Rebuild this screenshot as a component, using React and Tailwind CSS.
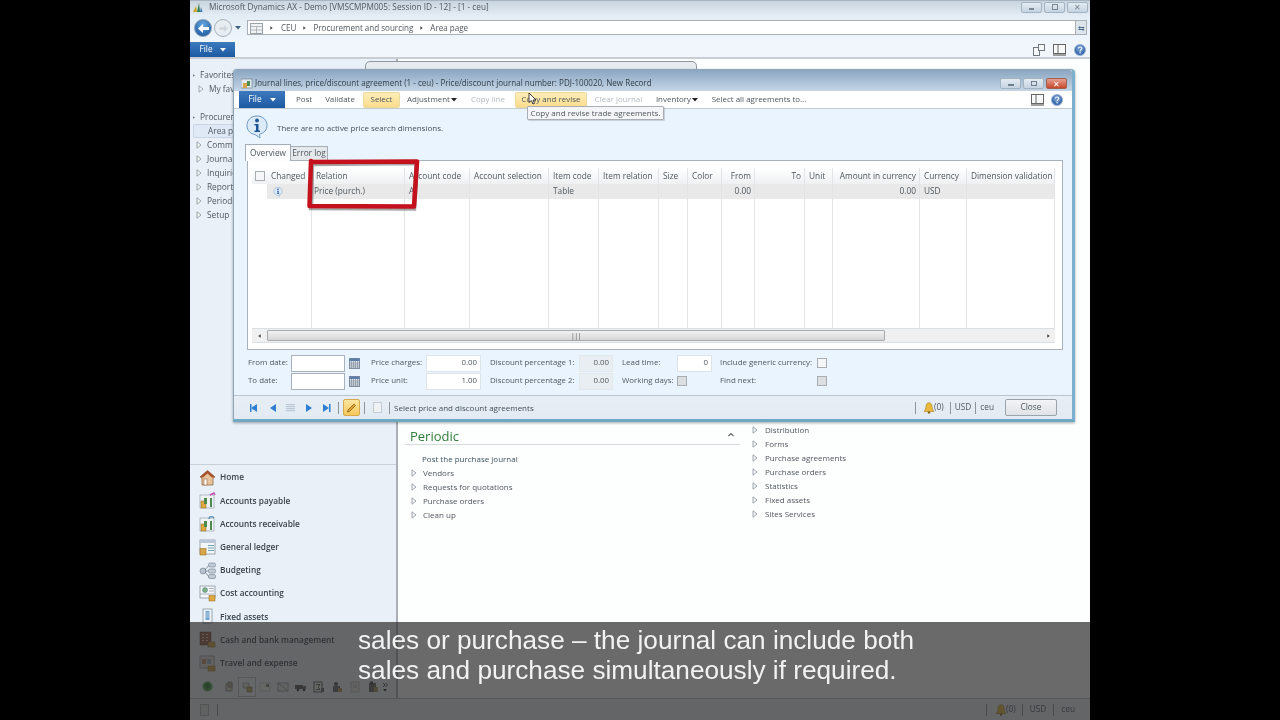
import React from "react";

const Tri = ({ c = "#8a949c" }) => (
  <svg width="6" height="8" viewBox="0 0 6 8" className="shrink-0"><path d="M1 .8 L5 4 L1 7.2 Z" fill="#f4f6f8" stroke={c} strokeWidth="0.8" /></svg>
);
const Solid = ({ dir = "r", c = "#444", s = 5 }) => (
  <svg width={s} height={s + 1} viewBox="0 0 5 6" className="shrink-0"><path d={dir === "r" ? "M.5 0 L4.5 3 L.5 6Z" : "M4.5 0 L.5 3 L4.5 6Z"} fill={c} /></svg>
);
const Drop = ({ c = "#222" }) => (
  <svg width="6" height="4" viewBox="0 0 6 4" className="shrink-0"><path d="M0 0H6L3 3.5Z" fill={c} /></svg>
);
const Help = ({ s = 13 }) => (
  <svg width={s} height={s} viewBox="0 0 13 13"><circle cx="6.5" cy="6.5" r="6" fill="#3f6fb0" stroke="#9db4d2" /><circle cx="6.5" cy="5" r="4" fill="#7fa6d8" opacity=".6" /><path d="M4.8 4.8c0-2 3.6-2 3.6 0 0 1.4-1.8 1.3-1.8 3" fill="none" stroke="#fff" strokeWidth="1.2" /><circle cx="6.6" cy="9.6" r=".8" fill="#fff" /></svg>
);
const BookIcon = () => (
  <svg width="13" height="12" viewBox="0 0 13 12"><rect x=".5" y=".5" width="12" height="9" fill="#f7f8f8" stroke="#666" /><path d="M5 .5V9.5" stroke="#666" /><path d="M0 11H13" stroke="#777" strokeWidth="1.4" /></svg>
);
const InfoBubble = ({ s = 22 }) => (
  <svg width={s} height={s} viewBox="0 0 22 24">
    <path d="M11 1C5 1 1 5 1 10.5 1 16 5 19 9 19.5L14 23 13.5 19.3C18 18 21 15 21 10.5 21 5 17 1 11 1Z" fill="#dcebf8" stroke="#6f97c0" />
    <circle cx="11" cy="5.5" r="1.9" fill="#1f5596" />
    <path d="M8.5 9H12.5V15.5H14V17H8.5V15.5H10V10.5H8.5Z" fill="#1f5596" />
  </svg>
);
const Calendar = () => (
  <svg width="11" height="11" viewBox="0 0 11 11"><rect x=".5" y=".5" width="10" height="10" fill="#dfe6ee" stroke="#7f8da0" /><rect x=".5" y=".5" width="10" height="2.5" fill="#5d7ea8" /><path d="M2.5 3V10.5M4.5 3V10.5M6.5 3V10.5M8.5 3V10.5M.5 5H10.5M.5 7H10.5M.5 9H10.5" stroke="#7a8796" strokeWidth=".6" /></svg>
);
const Check = ({ grey }) => (
  <span className={`block w-[10px] h-[10px] border border-[#a8adb2] ${grey ? "bg-[#dcdfe2]" : "bg-[#f4f6f8]"}`} />
);
const Bell = () => (
  <svg width="12" height="12" viewBox="0 0 12 12"><path d="M6 .8C3.8.8 3 2.6 3 4.5 3 7 1.5 8.5 1 9.5H11C10.5 8.5 9 7 9 4.5 9 2.6 8.2.8 6 .8Z" fill="#e8b93a" stroke="#a97f1a" strokeWidth=".6" /><circle cx="6" cy="10.5" r="1.2" fill="#8a6a1a" /></svg>
);

const WinBtn = ({ w = 21, children, red }) => (
  <span style={{ width: w }} className={`h-[11px] flex items-center justify-center border rounded-[2px] ${red ? "bg-[linear-gradient(#e8a090,#c8482c)] border-[#a0604f]" : "bg-[linear-gradient(#e3ebf2,#c6d3df)] border-[#a4b3c0]"}`}>{children}</span>
);

const leftTop = ["Comm", "Journal", "Inquirie", "Report", "Periodi", "Setup"];

const ModIcon = ({ kind }) => {
  if (kind === "home") return (
    <svg width="17" height="17" viewBox="0 0 17 17"><path d="M1 8 8.5 1.5 16 8 14 9V16H3V9Z" fill="#e6c39a" stroke="#8a5a32" strokeWidth=".7" /><path d="M1 8 8.5 1.5 16 8 13 8.5 8.5 4.5 4 8.5Z" fill="#a5502a" /><rect x="5" y="10" width="3" height="6" fill="#fff" stroke="#8a5a32" strokeWidth=".5" /></svg>
  );
  if (kind === "bud") return (
    <svg width="17" height="17" viewBox="0 0 17 17"><circle cx="4" cy="9" r="3" fill="#b8c3cf" stroke="#6f7d8c" strokeWidth=".6" /><path d="M6 8 10 3M6 9H10M6 10 10 15" stroke="#6f7d8c" strokeWidth=".8" /><rect x="9.500" y="1" width="7" height="4" rx="1.500" fill="#c2ccd6" stroke="#6f7d8c" strokeWidth=".6" /><rect x="9.500" y="7" width="7" height="4" rx="1.500" fill="#c2ccd6" stroke="#6f7d8c" strokeWidth=".6" /><rect x="9.500" y="12.500" width="7" height="4" rx="1.500" fill="#c2ccd6" stroke="#6f7d8c" strokeWidth=".6" /></svg>
  );
  if (kind === "fixed") return (
    <svg width="17" height="17" viewBox="0 0 17 17"><rect x="4" y="1" width="9" height="14" fill="#f0f3f6" stroke="#7d8894" strokeWidth=".7" /><rect x="6.500" y="3" width="4" height="9" fill="#6ea4cf" /><path d="M6.500 5H10.500M6.500 7H10.500M6.500 9H10.500" stroke="#dbe8f2" strokeWidth=".6" /></svg>
  );
  if (kind === "cash") return (
    <svg width="17" height="17" viewBox="0 0 17 17"><rect x="1" y="1" width="11" height="13" fill="#9c5f4a" stroke="#6a3a2a" strokeWidth=".5" /><path d="M3 3.500H5M7 3.500H9M3 6.500H5M7 6.500H9M3 9.500H5M7 9.500H9" stroke="#e8d0c0" /><rect x="9" y="11" width="7" height="5" fill="#d9a548" stroke="#8a6a20" strokeWidth=".5" /></svg>
  );
  if (kind === "travel") return (
    <svg width="17" height="17" viewBox="0 0 17 17"><rect x="1" y="1" width="14" height="12" fill="#e6e1dc" stroke="#7d8894" strokeWidth=".7" /><rect x="3" y="4" width="4" height="5" fill="#c88c70" /><rect x="8" y="4" width="4" height="5" fill="#9db5c8" /><rect x="9" y="11" width="7" height="5" fill="#d9a548" stroke="#8a6a20" strokeWidth=".5" /></svg>
  );
  if (kind === "doc") return (
    <svg width="17" height="17" viewBox="0 0 17 17"><rect x="1" y="1" width="15" height="12" fill="#f6f7f8" stroke="#7d8894" strokeWidth=".7" /><circle cx="6" cy="5" r="2.500" fill="#7cb07c" stroke="#4b7d9c" strokeWidth=".5" /><path d="M10 3.500H15M10 6H15M1 9H15" stroke="#8795a3" strokeWidth=".7" /><rect x="10" y="10.500" width="6" height="5.500" fill="#e0a83f" stroke="#8a6a20" strokeWidth=".5" /></svg>
  );
  if (kind === "gl") return (
    <svg width="17" height="17" viewBox="0 0 17 17"><rect x="1" y="1" width="15" height="14" fill="#f4f6f8" stroke="#7d8894" strokeWidth=".7" /><rect x="1" y="1" width="15" height="3" fill="#b9c8d8" /><path d="M9 6.500H15M9 9H15M9 11.500H15" stroke="#5e9bb0" strokeWidth=".9" /><rect x="1" y="9.500" width="6" height="6.500" fill="#d9a548" stroke="#8a6a20" strokeWidth=".5" /></svg>
  );
  return (
    <svg width="17" height="17" viewBox="0 0 17 17"><rect x="1" y="3" width="14" height="13" fill="#eef2f5" stroke="#8d99a5" strokeWidth=".6" /><rect x="2" y="9" width="5" height="7" fill="#e0a83f" stroke="#8a6a20" strokeWidth=".5" /><rect x="5" y="6" width="3" height="6" fill="#4f8a4f" /><rect x="11" y="6" width="2" height="9" fill="#4f8a4f" /><path d={kind === "ap" ? "M11 3 15 1 16 3" : "M10 4C10 1 14 1 15 3"} stroke={kind === "ap" ? "#c050b0" : "#4f8fc0"} strokeWidth="1.400" fill="none" /></svg>
  );
};

const modules = [
  ["home", "Home"], ["ap", "Accounts payable"], ["ar", "Accounts receivable"], ["gl", "General ledger"],
  ["bud", "Budgeting"], ["doc", "Cost accounting"], ["fixed", "Fixed assets"], ["cash", "Cash and bank management"], ["travel", "Travel and expense"],
];

const tinyIcons = [
  <g key="a"><rect x="3" y="3" width="6" height="7" fill="#d8d4c4" stroke="#555" strokeWidth=".6" /><rect x="5" y="1" width="4" height="5" fill="#b5b09a" stroke="#555" strokeWidth=".5" /></g>,
  <g key="b"><rect x="2" y="2" width="6" height="5" fill="#e0e0d8" stroke="#666" strokeWidth=".5" /><rect x="6" y="6" width="5" height="5" fill="#c8a850" stroke="#555" strokeWidth=".5" /></g>,
  <g key="c"><rect x="1" y="2" width="10" height="8" fill="#f0f0ea" stroke="#aaa" strokeWidth=".5" /><rect x="7" y="3" width="3" height="3" fill="#888" /></g>,
  <g key="d"><rect x="1" y="2" width="10" height="8" fill="#e4e8e8" stroke="#666" strokeWidth=".6" /><path d="M2 3 10 9" stroke="#777" strokeWidth=".7" /></g>,
  <g key="e"><rect x="0" y="4" width="8" height="4" fill="#555" /><rect x="7" y="5" width="4" height="3" fill="#666" /><circle cx="3" cy="9" r="1.300" fill="#333" /><circle cx="9" cy="9" r="1.300" fill="#333" /></g>,
  <g key="f"><rect x="1" y="1" width="8" height="10" fill="#f4f4ee" stroke="#333" strokeWidth=".8" /><path d="M3 3.500H7L5 6 7 8.500H3" fill="none" stroke="#333" strokeWidth=".8" /><rect x="8" y="7" width="3" height="4" fill="#666" /></g>,
  <g key="g"><circle cx="5" cy="3" r="2" fill="#555" /><rect x="2" y="5" width="7" height="6" fill="#667" /><rect x="7" y="7" width="4" height="4" fill="#b59a50" /></g>,
  <g key="h"><rect x="2" y="1" width="8" height="10" fill="#ecece6" stroke="#999" strokeWidth=".6" /><rect x="4" y="3" width="4" height="4" fill="#ccc" /></g>,
  <g key="i"><rect x="2" y="2" width="7" height="9" fill="#666" /><rect x="7" y="6" width="4" height="5" fill="#a69a60" /><rect x="3" y="0.500" width="3" height="3" fill="#444" /></g>,
];

const colsDef = [
  ["", 15], ["Changed", 45, "l"], ["Relation", 93, "l"], ["Account code", 65, "l"], ["Account selection", 79, "l"], ["Item code", 50, "l"],
  ["Item relation", 60, "l"], ["Size", 29, "l"], ["Color", 34, "l"], ["From", 33, "r"], ["To", 50, "r"], ["Unit", 28, "l"],
  ["Amount in currency", 87, "r"], ["Currency", 47, "l"], ["Dimension validation", 88, "l"],
];
const rowVals = { Relation: "Price (purch.)", "Account code": "A", "Item code": "Table", From: "0.00", "Amount in currency": "0.00", Currency: "USD" };

const Tool = ({ w, ml = 0, children, hi, dis }) => (
  <span style={{ width: w, marginLeft: ml }} className={`h-[16px] flex items-center justify-center gap-[1px] shrink-0 whitespace-nowrap rounded-[2px] ${hi ? "bg-[linear-gradient(#fdeeb8,#fbdc8c)] border border-[#ecd9a0]" : ""} ${dis ? "text-[#b4b9bf]" : ""}`}>{children}</span>
);

const Sep = ({ ml = 0, mr = 0 }) => <span style={{ marginLeft: ml, marginRight: mr }} className="block w-px h-[12px] bg-[#8d949b] shrink-0" />;

const Field = ({ children, ro }) => (
  <span className={`h-[17px] flex items-center justify-end pr-[3px] border ${ro ? "bg-[#e9eef2] border-[#e3e8ec]" : "bg-white border-[#dce3e9]"}`}>{children}</span>
);
const DateField = () => <span className="h-[17px] block bg-white border border-[#a9b2bb]" />;

const Nav = ({ children, className = "" }) => <span className={`shrink-0 flex items-center justify-center ${className}`}>{children}</span>;
const NavArrow = ({ d, bar }) => (
  <svg width="10" height="10" viewBox="0 0 10 10">
    <path d={d === "r" ? "M2 1 8 5 2 9Z" : "M8 1 2 5 8 9Z"} fill="#2f7fd0" />
    {bar && <rect x={d === "r" ? 8 : 1} y="1" width="1.500" height="8" fill="#2f7fd0" />}
  </svg>
);

export default function App() {
  return (
    <div className="w-[1280px] h-[720px] bg-black flex justify-center overflow-hidden [font-family:'Open_Sans','Noto_Sans',sans-serif] text-[8.3px] text-[#50585f]">
      <div className="relative w-[900px] h-[720px] flex flex-col bg-[#edf3fa] [filter:blur(0.3px)]">
        {/* Title bar */}
        <div className="h-[14px] flex items-center pl-[2px] pr-[2px] bg-[linear-gradient(#8d9aa6_0,#c9d5df_8%,#e0e9f1)]">
          <svg width="11" height="11" viewBox="0 0 11 11" className="mr-[6px]"><path d="M1 10 4 4 5 10Z" fill="#c9a227" /><path d="M5 10 7 1 8 10Z" fill="#2e7d4a" /><path d="M8 10 9 5 10.500 10Z" fill="#3c78b0" /></svg>
          <span className="text-[8.25px] whitespace-nowrap pt-[1px]">Microsoft Dynamics AX - Demo [VMSCMPM005: Session ID - 12] -  [1 - ceu]</span>
          <span className="ml-auto flex gap-[2px]">
            <WinBtn><span className="w-[5px] h-[2px] bg-[#7a8794] mt-[3px]" /></WinBtn>
            <WinBtn><span className="w-[6px] h-[6px] border border-[#7a8794]" /></WinBtn>
            <WinBtn><span className="text-[8px] leading-none text-[#7a8794]">✕</span></WinBtn>
          </span>
        </div>
        {/* Address bar */}
        <div className="h-[28px] pt-[6px] flex items-start pl-[4px] pr-[3px] bg-[linear-gradient(#e3ecf4,#f0f6fc)]">
          <span className="w-[18px] h-[18px] -mt-[1px] rounded-full bg-[radial-gradient(circle_at_50%_30%,#6aa8e0,#0f4d96)] border border-[#8aa0b8] flex items-center justify-center shrink-0">
            <svg width="11" height="9" viewBox="0 0 11 9"><path d="M5 0 0 4.500 5 9V6H11V3H5Z" fill="#fff" /></svg>
          </span>
          <span className="w-[18px] h-[18px] -mt-[1px] ml-[2px] rounded-full bg-[#e8edf2] border border-[#a8b2bc] flex items-center justify-center shrink-0">
            <svg width="9" height="7" viewBox="0 0 11 9"><path d="M6 0 11 4.500 6 9V6H0V3H6Z" fill="#cfd6dd" /></svg>
          </span>
          <span className="ml-[3px] mt-[6px] mr-[6px] shrink-0"><Drop c="#44627f" /></span>
          <div className="flex-1 h-[15px] bg-white border border-[#a9afb5] border-r-0 flex items-center pl-[2px] pt-[1px] text-[8.05px]">
            <svg width="13" height="11" viewBox="0 0 13 11" className="shrink-0"><rect x=".5" y=".5" width="12" height="10" fill="#f0f2f4" stroke="#9aa3ac" /><path d="M.5 3.500H12.500M.5 7H12.500M6.500 3.500V10.500" stroke="#9aa3ac" strokeWidth=".7" /></svg>
            <span className="ml-[7px] mr-[8px]"><Solid s={3} /></span>
            <span>CEU</span>
            <span className="ml-[7px] mr-[7px]"><Solid s={3} /></span>
            <span>Procurement and sourcing</span>
            <span className="ml-[7px] mr-[7px]"><Solid s={3} /></span>
            <span>Area page</span>
          </div>
          <span className="w-[12px] h-[15px] bg-[#dde4ea] border border-[#a9afb5] flex items-center justify-center text-[8px] text-[#4a6a8a] shrink-0">⇆</span>
        </div>
        {/* File row */}
        <div className="h-[17px] flex items-stretch pr-[4px] border-b-2 border-[#c9ced2] bg-[#f0f6fc]">
          <span className="w-[45px] flex items-center justify-center gap-[7px] text-white bg-[linear-gradient(#3d79bd,#1c5aa3)]">File <Drop c="#fff" /></span>
          <span className="ml-auto flex items-center gap-[8px]">
            <svg width="12" height="12" viewBox="0 0 12 12"><rect x=".5" y="3.500" width="6" height="8" fill="#f4f6f8" stroke="#6f7880" /><rect x="5.500" y=".5" width="6" height="6" fill="#f4f6f8" stroke="#6f7880" /></svg>
            <BookIcon />
            <Help s={12} />
          </span>
        </div>
        {/* Body */}
        <div className="flex-1 min-h-0 flex">
          <aside className="w-[206px] flex flex-col bg-[#e9f0f8]">
            <div className="h-[406px] pt-[9px] border-b border-[#c9d0d6]">
              <div className="h-[14px] flex items-center pl-[3px] gap-[5px]"><Solid s={2} c="#555" /> <span>Favorites</span></div>
              <div className="h-[14px] flex items-center pl-[8px] gap-[5px]"><Tri /><span>My fav</span></div>
              <div className="h-[14px]" />
              <div className="h-[14px] flex items-center pl-[3px] gap-[5px]"><Solid s={2} c="#555" /> <span>Procuren</span></div>
              <div className="h-[14px] flex items-center pl-[14px] ml-[3px] bg-[#dfe9f5] border-y border-l border-[#c8d6e6] rounded-l-[2px]">Area pa</div>
              {leftTop.map((t) => (
                <div key={t} className="h-[14px] flex items-center pl-[6px] gap-[5px]"><Tri /><span>{t}</span></div>
              ))}
            </div>
            <div className="pt-[1px] flex-1 flex flex-col">
              {modules.map(([k, t]) => (
                <div key={t} className="h-[23.2px] flex items-center pl-[9px] gap-[4px] shrink-0 font-semibold text-[#3a4248]">
                  <ModIcon kind={k} /><span>{t}</span>
                </div>
              ))}
              <div className="flex items-center pl-[12px] h-[20px] mt-[2px]">
                <svg width="11" height="11" viewBox="0 0 11 11" className="mr-[7px] shrink-0"><circle cx="5.500" cy="5.500" r="5" fill="#4caf50" /><path d="M2 4 6 1 9 5 5 10Z" fill="#2e7d32" /></svg>
                {tinyIcons.map((ic, i) => (
                  <span key={i} className={`w-[18px] h-[20px] flex items-center justify-center shrink-0 ${i === 1 ? "border border-[#b9bfc4] bg-[#f2f5f8]" : ""}`}>
                    <svg width="12" height="12" viewBox="0 0 12 12">{ic}</svg>
                  </span>
                ))}
                <svg width="6" height="10" viewBox="0 0 6 10" className="ml-[0px] shrink-0"><path d="M1 1 3 3 1 5M3.500 1 5.500 3 3.500 5" fill="none" stroke="#222" strokeWidth=".8" /><path d="M1 7H5L3 9.500Z" fill="#222" /></svg>
              </div>
            </div>
          </aside>
          <div className="w-[2px] bg-[#aab0b5]" />
          <main className="flex-1 bg-[#fdfefe] flex pt-[364px] pl-[7px] text-[8px]">
            <section className="w-[335px] mt-[5px]">
              <div className="h-[17px] flex items-start justify-between pl-[5px] pr-[6px] border-b border-[#d5dade]">
                <span className="text-[13px] leading-[16px] text-[#2f7d3a]">Periodic</span>
                <svg width="6" height="5" viewBox="0 0 6 5" className="mt-[4px]"><path d="M.5 4 3 1.500 5.500 4" fill="none" stroke="#666" strokeWidth="1.200" /></svg>
              </div>
              <div className="pt-[6.500px] pl-[6px]">
                <div className="h-[14px] flex items-center pl-[11px] text-[#3d5360]">Post the purchase journal</div>
                {["Vendors", "Requests for quotations", "Purchase orders", "Clean up"].map((t) => (
                  <div key={t} className="h-[14px] flex items-center gap-[6px]"><Tri /><span>{t}</span></div>
                ))}
              </div>
            </section>
            <section className="ml-[12px]">
              {["Distribution", "Forms", "Purchase agreements", "Purchase orders", "Statistics", "Fixed assets", "Sites Services"].map((t) => (
                <div key={t} className="h-[14px] flex items-center gap-[7px]"><Tri /><span>{t}</span></div>
              ))}
            </section>
          </main>
        </div>
        {/* Status */}
        <div className="h-[22px] flex items-center bg-[#e6edf4] border-t border-[#b6bcc2] pl-[10px] pr-[15px]">
          <span className="w-[9px] h-[12px] bg-[#dde0e2] border border-[#aeb3b7]" />
          <Sep ml={8} />
          <span className="ml-auto flex items-center">
            <Sep mr={8} /><Bell /><span className="-ml-[1px]">(0)</span><Sep ml={6} mr={7} /><span>USD</span><Sep ml={7} mr={7} /><span>ceu</span>
          </span>
        </div>

        {/* Tab behind the dialog */}
        <div className="absolute left-[175px] top-[61px] w-[332px] h-[12px] border border-[#8f979e] rounded-t-[5px] bg-[#e7eaee]" />

        {/* Dialog */}
        <div className="absolute left-[43px] top-[69px] w-[842px] h-[353px] flex flex-col rounded-t-[4px] bg-[#eaf4fe] border border-[#8ea6ba] border-b-[3px] border-b-[#6fa8c2] border-r-[3px] border-r-[#7db0cc] shadow-[0_1px_3px_rgba(0,0,0,0.35)]">
          <div className="h-[21px] shrink-0 flex items-center pt-[6px] pl-[7px] pr-[5px] rounded-t-[3px] bg-[linear-gradient(#8ba6c2,#c4d6e6)]">
            <svg width="12" height="11" viewBox="0 0 12 11" className="mr-[2px]"><rect y="1" width="11" height="9" fill="#dfe8ef" stroke="#6a7a88" strokeWidth=".6" /><rect x="2" y="5" width="4" height="5" fill="#d9a548" /><rect x="6" y="3" width="3" height="5" fill="#4f8a4f" /></svg>
            <span className="text-[8.05px] text-[#33404a] whitespace-nowrap">Journal lines, price/discount agreement (1 - ceu) - Price/discount journal number: PDJ-100020, New Record</span>
            <span className="ml-auto flex gap-[2px]">
              <WinBtn><span className="w-[6px] h-[2px] bg-[#6f7f8e] mt-[2px]" /></WinBtn>
              <WinBtn><span className="w-[6px] h-[5px] border border-[#6f7f8e]" /></WinBtn>
              <WinBtn red><span className="text-[8px] leading-none text-white">✕</span></WinBtn>
            </span>
          </div>
          {/* Toolbar */}
          <div className="h-[18px] shrink-0 flex items-center pl-[5px] pr-[9px] bg-white border-b border-[#c3cbd2] text-[7.95px]">
            <span className="w-[46px] h-[17px] flex items-center justify-center gap-[8px] text-white bg-[linear-gradient(#3d79bd,#1c5aa3)] shrink-0 text-[8.3px]">File <Drop c="#fff" /></span>
            <Tool w={22} ml={8}>Post</Tool>
            <Tool w={38} ml={6}>Validate</Tool>
            <Tool w={37} ml={4} hi>Select</Tool>
            <Tool w={52} ml={6}>Adjustment<Drop /></Tool>
            <Tool w={38} ml={11} dis>Copy line</Tool>
            <Tool w={72} ml={8} hi>Copy and revise</Tool>
            <Tool w={51} ml={6} dis>Clear journal</Tool>
            <Tool w={46} ml={10}>Inventory<Drop /></Tool>
            <Tool w={96} ml={11}>Select all agreements to...</Tool>
            <span className="ml-auto flex items-center gap-[7px]"><BookIcon /><Help s={12} /></span>
          </div>
          {/* Info */}
          <div className="h-[34px] shrink-0 flex items-center pl-[11px] gap-[8px] pt-[1px]">
            <InfoBubble s={24} />
            <span className="text-[#44505a] text-[8px] mt-[3px]">There are no active price search dimensions.</span>
          </div>
          {/* Tabs */}
          <div className="h-[17px] shrink-0 flex items-end pl-[11px]">
            <span className="w-[46px] h-[17px] flex items-center justify-center bg-[#fbfdfe] border border-b-0 border-[#a4adb5] relative top-px z-10">Overview</span>
            <span className="w-[37px] h-[14px] flex items-center justify-center bg-[#e6e9ec] border border-l-0 border-b-0 border-[#a4adb5]">Error log</span>
          </div>
          {/* Grid panel */}
          <div className="ml-[13px] w-[816px] h-[190px] shrink-0 bg-white border border-[#aab2b9] pt-[7px] pl-[4px]">
            <div className="w-[803px] h-[175px] flex flex-col border-b border-[#d9dee2]">
              <div className="h-[161px] flex">
                {colsDef.map(([h, w, al], i) => (
                  <div key={i} style={{ width: w }} className={`shrink-0 flex flex-col ${i === 0 ? "" : "border-r border-[#e2e5e8]"}`}>
                    <div className={`h-[16px] shrink-0 flex items-center bg-[linear-gradient(#ffffff,#eef0f2)] whitespace-nowrap ${al === "r" ? "justify-end pr-[3px]" : "pl-[4px]"}`}>
                      {i === 0 ? <span className="ml-[-1px]"><Check /></span> : h}
                    </div>
                    {i === 0 ? (
                      <div className="h-[15px]" />
                    ) : (
                      <div className={`h-[15px] shrink-0 flex items-center bg-[#e9e9e9] whitespace-nowrap ${al === "r" ? "justify-end pr-[3px]" : h === "Relation" ? "pl-[2px]" : "pl-[4px]"}`}>
                        {i === 1 ? <span className="ml-[2px]"><InfoBubble s={10} /></span> : rowVals[h]}
                      </div>
                    )}
                  </div>
                ))}
              </div>
              <div className="h-[14px] flex items-center bg-[#f0f0f0] border-t border-[#d9dee2]">
                <span className="w-[15px] flex justify-center"><Solid dir="l" s={3} c="#333" /></span>
                <div className="w-[618px] h-[11px] flex items-center justify-center rounded-[1px] border border-[#a6abb0] bg-[linear-gradient(#f2f2f2,#d6d6d6)] text-[7px] leading-none tracking-[-0.5px] text-[#555]">|||</div>
                <span className="ml-auto w-[14px] flex justify-center"><Solid s={3} c="#333" /></span>
              </div>
            </div>
          </div>
          {/* Form */}
          <div className="ml-[14px] mt-[4px] shrink-0 grid grid-cols-[43px_54px_26px_55px_55px_9px_89px_34px_9px_55px_35px_8px_97px_12px] grid-rows-[18px_18px] items-center text-[7.9px]">
            <span>From date:</span><DateField /><span className="pl-[4px]"><Calendar /></span><span>Price charges:</span><Field>0.00</Field><span />
            <span>Discount percentage 1:</span><Field ro>0.00</Field><span /><span>Lead time:</span><Field>0</Field><span />
            <span>Include generic currency:</span><Check />
            <span>To date:</span><DateField /><span className="pl-[4px]"><Calendar /></span><span>Price unit:</span><Field>1.00</Field><span />
            <span>Discount percentage 2:</span><Field ro>0.00</Field><span /><span>Working days:</span><span className="flex"><Check grey /></span><span />
            <span>Find next:</span><Check grey />
          </div>
          {/* Status */}
          <div className="mt-[5px] flex-1 flex items-center pl-[15px] pr-[15px] bg-[linear-gradient(#e7eef5,#e2eaf3)] border-t border-[#bcc4cb]">
            <Nav className="w-[10px]"><NavArrow d="l" bar /></Nav>
            <Nav className="w-[10px] ml-[9px]"><NavArrow d="l" /></Nav>
            <Nav className="w-[9px] ml-[8px]"><span className="w-[9px] h-[8px] bg-[repeating-linear-gradient(#b9c8d8_0,#b9c8d8_1px,#dde6ee_1px,#dde6ee_2px)]" /></Nav>
            <Nav className="w-[10px] ml-[9px]"><NavArrow d="r" /></Nav>
            <Nav className="w-[10px] ml-[7px]"><NavArrow d="r" bar /></Nav>
            <Sep ml={7} />
            <span className="ml-[4px] w-[17px] h-[17px] shrink-0 flex items-center justify-center bg-[linear-gradient(#fde6a0,#f6c85c)] border border-[#d9a94a] rounded-[2px]">
              <svg width="11" height="11" viewBox="0 0 11 11"><path d="M2 8 8 2 9.500 3.500 3.500 9.500 1.500 10Z" fill="#e8a020" stroke="#7a5a20" strokeWidth=".7" /></svg>
            </span>
            <Sep ml={4} />
            <span className="ml-[8px] w-[9px] h-[11px] block bg-[#eef2f5] border border-[#c3cad0]" />
            <Sep ml={7} />
            <span className="ml-[4px] whitespace-nowrap text-[#44505a] text-[8px]">Select price and discount agreements</span>
            <span className="ml-auto flex items-center">
              <Sep mr={7} /><Bell /><span className="-ml-[1px]">(0)</span><Sep ml={6} mr={4} /><span>USD</span><Sep ml={4} mr={4} /><span>ceu</span>
              <span className="ml-[11px] w-[52px] h-[17px] flex items-center justify-center rounded-[2px] border border-[#9aa3ab] bg-[linear-gradient(#f2f4f6,#dfe3e7)]">Close</span>
            </span>
          </div>
          {/* Red hand-drawn annotation over the grid */}
          <svg width="120" height="56" viewBox="0 0 120 56" className="absolute left-[70px] top-[87px] z-10 overflow-visible">
            <path d="M7 5.500 L112 4.500 L109 50 L6 49.500 Z" fill="none" stroke="#000" strokeOpacity=".35" strokeWidth="4.500" transform="translate(1 1.500)" />
            <path d="M7 5 L113 4.500 L110 49.500 L5.500 49 L7 4" fill="none" stroke="#c5111d" strokeWidth="4.500" strokeLinejoin="round" strokeLinecap="round" />
          </svg>
          {/* Tooltip */}
          <span className="absolute left-[293px] top-[36px] h-[14px] w-[137px] flex items-center justify-center text-[8px] bg-[#f3f5f7] border border-[#a8aeb4] rounded-[1px] whitespace-nowrap z-20 shadow-[1px_1px_1px_rgba(0,0,0,0.15)]">Copy and revise trade agreements.</span>
          {/* Cursor */}
          <svg width="9" height="13" viewBox="0 0 9 13" className="absolute left-[294px] top-[22px] z-30"><path d="M1 1V10.500L3.300 8.500 5 12 6.500 11.300 5 8H8Z" fill="#fff" stroke="#111" strokeWidth=".8" /></svg>
        </div>

        {/* Caption */}
        <div className="absolute left-0 right-0 top-[622px] bottom-0 bg-[#2b2b2b]/70 pl-[168px] pt-[3px] [font-family:'Liberation_Sans',sans-serif] text-[26.2px] leading-[30px] text-[#f2f2f2] whitespace-nowrap">
          <p>sales or purchase – the journal can include both</p>
          <p>sales and purchase simultaneously if required.</p>
        </div>
      </div>
    </div>
  );
}
